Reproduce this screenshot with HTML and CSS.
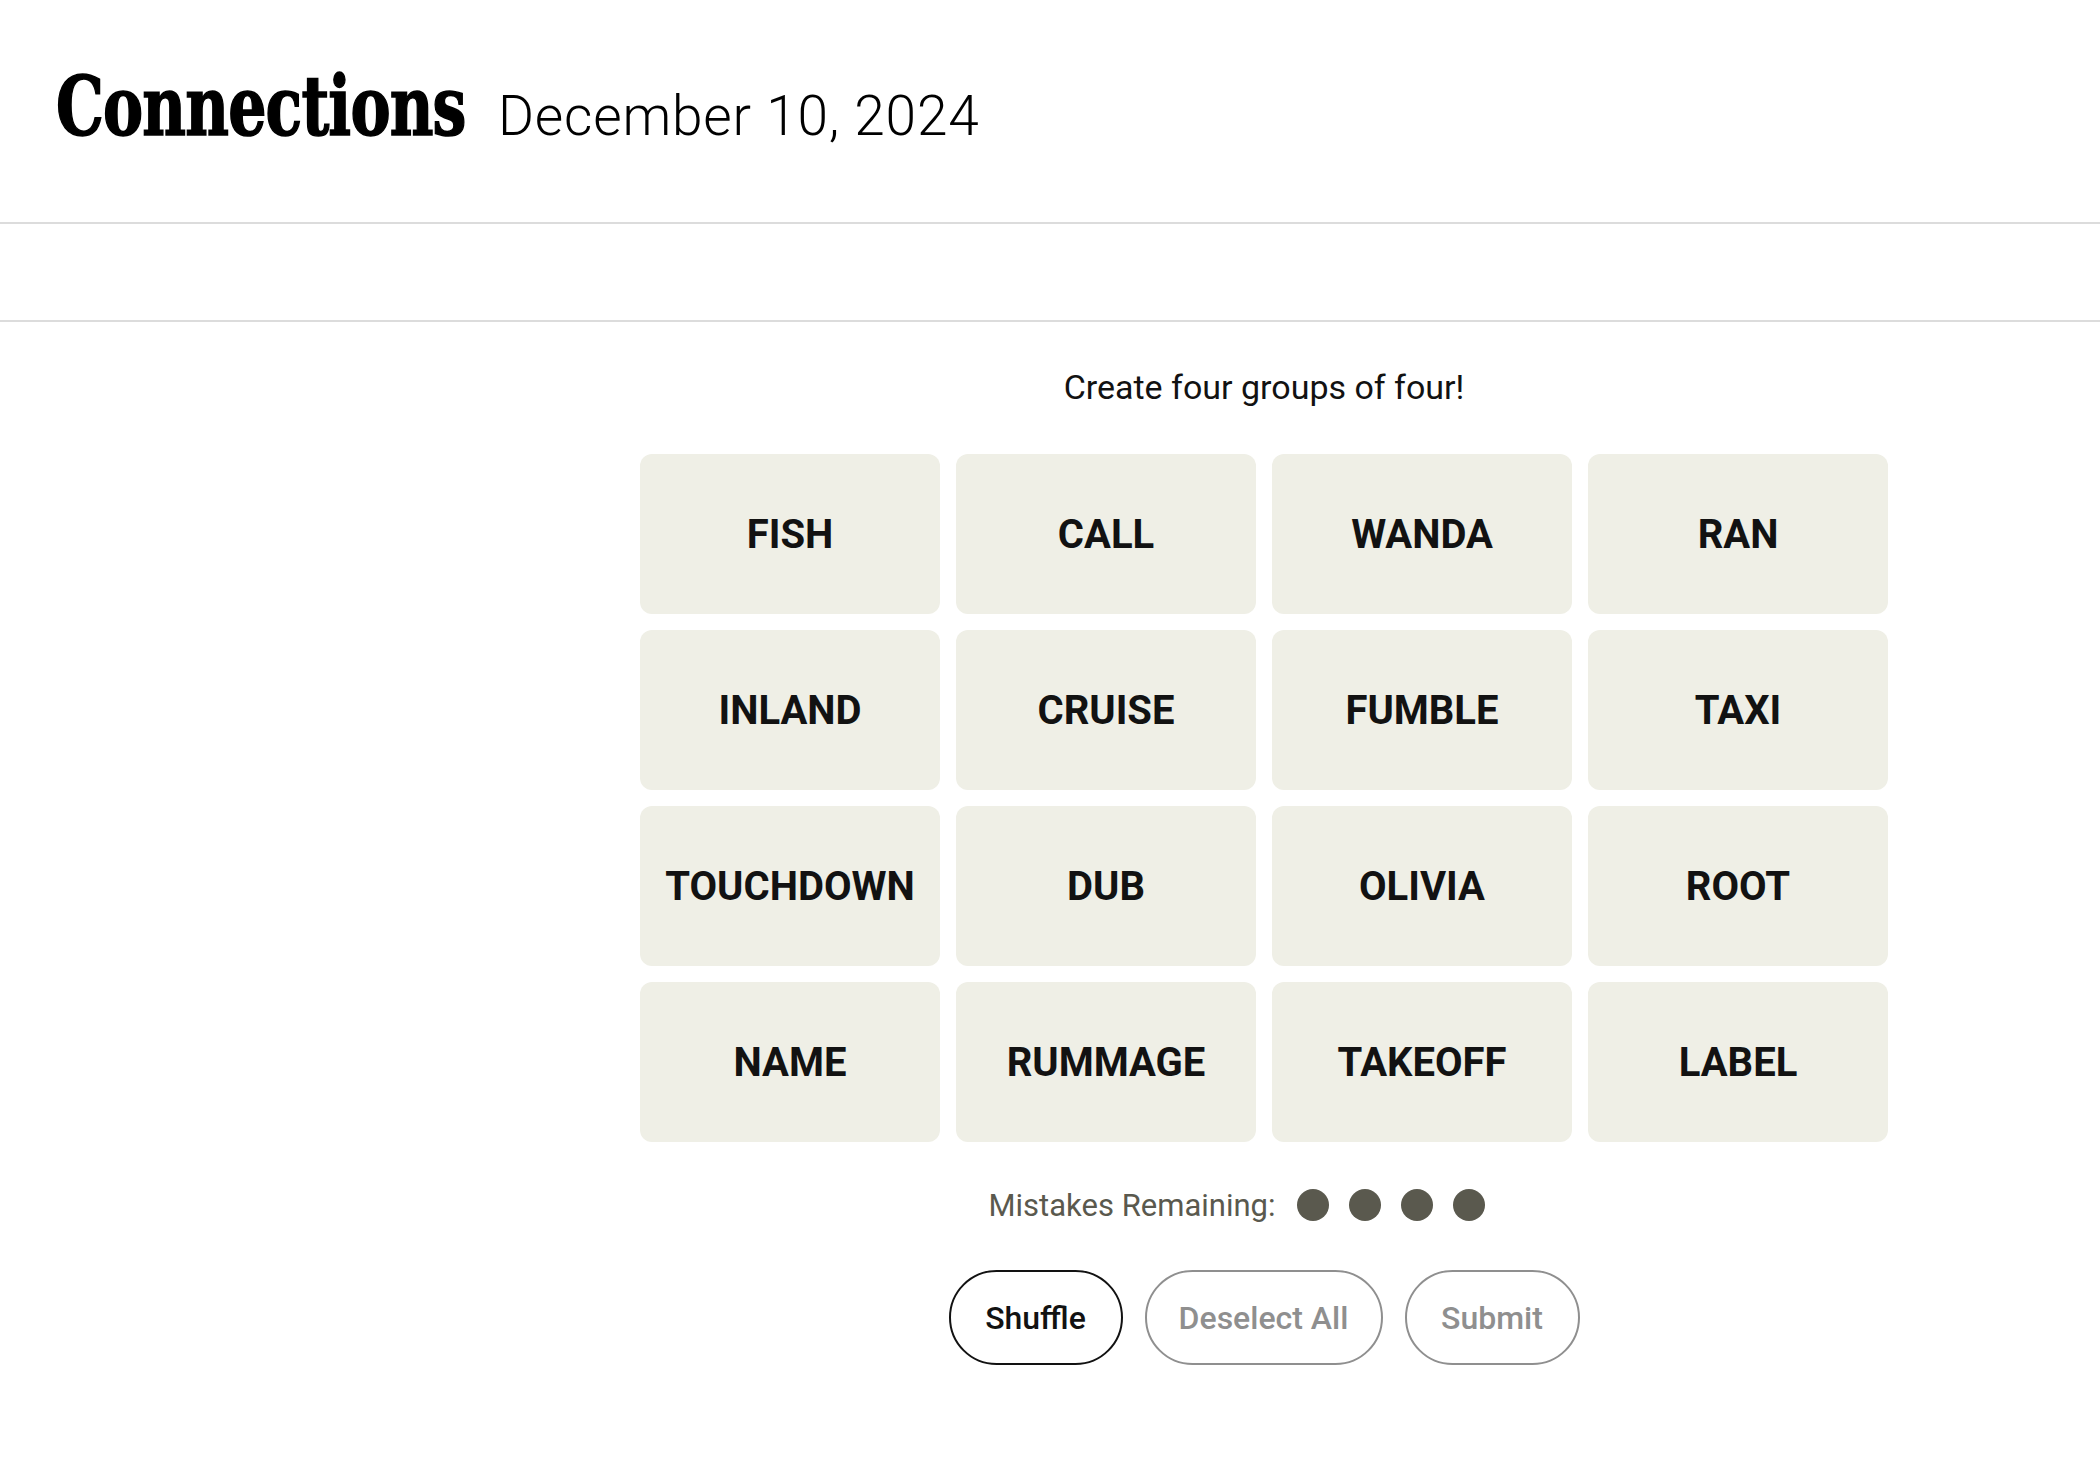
FILE: index.html
```html
<!DOCTYPE html>
<html lang="en">
<head>
<meta charset="utf-8">
<title>Connections</title>
<link rel="stylesheet" href="styles.css">
</head>
<body>
<header class="topbar">
  <div class="title-wrap"><h1 class="title">Connections</h1></div>
  <span class="date">December 10, 2024</span>
</header>
<div class="toolbar"></div>
<main class="game">
  <p class="prompt">Create four groups of four!</p>
  <div class="board">
    <div class="tile">FISH</div>
    <div class="tile">CALL</div>
    <div class="tile">WANDA</div>
    <div class="tile">RAN</div>
    <div class="tile">INLAND</div>
    <div class="tile">CRUISE</div>
    <div class="tile">FUMBLE</div>
    <div class="tile">TAXI</div>
    <div class="tile">TOUCHDOWN</div>
    <div class="tile">DUB</div>
    <div class="tile">OLIVIA</div>
    <div class="tile">ROOT</div>
    <div class="tile">NAME</div>
    <div class="tile">RUMMAGE</div>
    <div class="tile">TAKEOFF</div>
    <div class="tile">LABEL</div>
  </div>
  <div class="mistakes">
    <span class="mistakes-label">Mistakes Remaining:</span>
    <span class="dots">
      <span class="dot"></span><span class="dot"></span><span class="dot"></span><span class="dot"></span>
    </span>
  </div>
  <div class="actions">
    <button class="btn btn-active btn-shuffle">Shuffle</button>
    <button class="btn btn-disabled btn-deselect">Deselect All</button>
    <button class="btn btn-disabled btn-submit">Submit</button>
  </div>
</main>
</body>
</html>
```

FILE: styles.css
```css
html, body {
  margin: 0;
  padding: 0;
  background: #ffffff;
  color: #000000;
  font-family: Roboto, "Liberation Sans", sans-serif;
}

.topbar {
  height: 224px;
  border-bottom: 2px solid #dcdcdc;
  display: flex;
  align-items: baseline;
  padding-left: 56px;
  box-sizing: border-box;
  gap: 33px;
}

.title-wrap {
  width: 409px;
  padding-top: 65px;
}

.title {
  margin: 0;
  font-family: "DejaVu Serif", serif;
  font-stretch: condensed;
  font-weight: 700;
  font-size: 82px;
  line-height: 1;
  letter-spacing: -1px;
  white-space: nowrap;
  color: #000;
  -webkit-text-stroke: 1.5px #000;
  transform: scaleX(0.815);
  transform-origin: left center;
}

.date {
  font-family: Roboto, "Liberation Sans", sans-serif;
  font-weight: 300;
  font-size: 55px;
  letter-spacing: 0.8px;
  color: #000;
}

.toolbar {
  height: 96px;
  border-bottom: 2px solid #dcdcdc;
}

.game {
  margin-left: 640px;
  width: 1248px;
  display: flex;
  flex-direction: column;
  align-items: center;
}

.prompt {
  margin: 45px 0 0;
  font-size: 34px;
  line-height: 40px;
  color: #121212;
}

.board {
  margin-top: 47px;
  display: grid;
  grid-template-columns: repeat(4, 300px);
  grid-auto-rows: 160px;
  gap: 16px;
}

.tile {
  background: #efefe6;
  border-radius: 12px;
  display: flex;
  align-items: center;
  justify-content: center;
  font-weight: 700;
  font-size: 40px;
  color: #121212;
}

.mistakes {
  margin-top: 43px;
  margin-right: 54px;
  height: 40px;
  display: flex;
  align-items: center;
  gap: 22px;
}

.mistakes-label {
  font-size: 31px;
  color: #5a594e;
}

.dots {
  display: flex;
  gap: 20px;
}

.dot {
  width: 32px;
  height: 32px;
  border-radius: 50%;
  background: #5a594e;
}

.actions {
  margin-top: 45px;
  display: flex;
  gap: 22px;
}

.btn {
  height: 95px;
  border-radius: 48px;
  background: #fff;
  font-family: Roboto, "Liberation Sans", sans-serif;
  font-weight: 500;
  font-size: 32px;
  padding: 0;
  box-sizing: border-box;
}

.btn-active {
  border: 2px solid #121212;
  color: #121212;
}

.btn-disabled {
  border: 2px solid #8f8f8f;
  color: #8f8f8f;
}

.btn-shuffle { width: 174px; }
.btn-deselect { width: 238px; }
.btn-submit { width: 175px; }
```
